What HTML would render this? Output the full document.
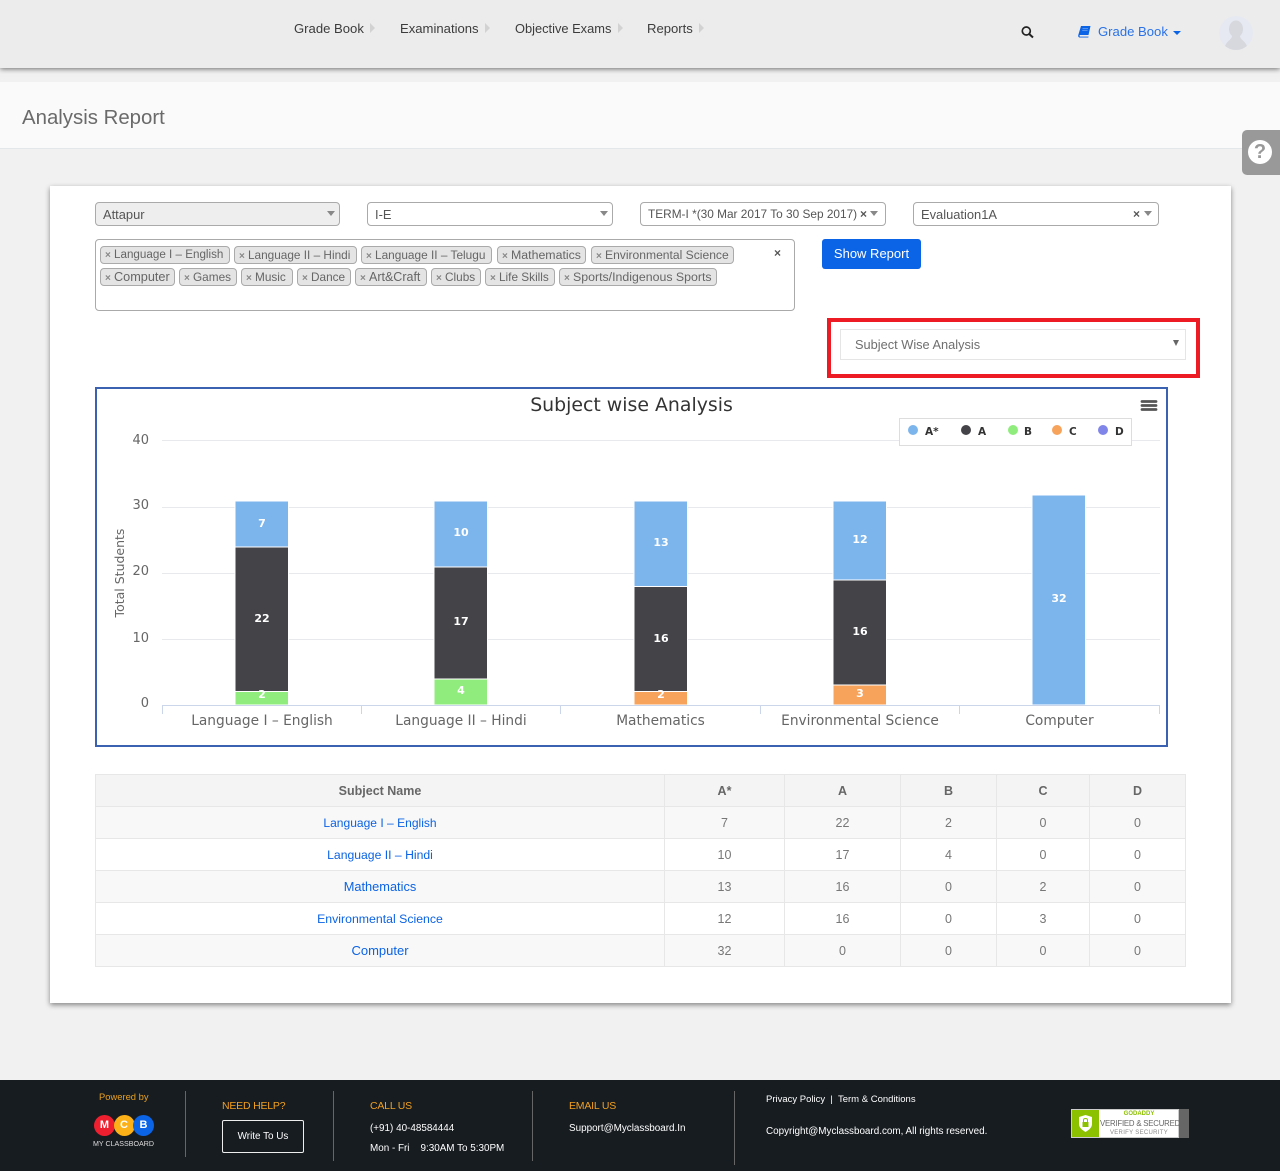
<!DOCTYPE html>
<html><head><meta charset="utf-8"><title>Analysis Report</title>
<style>
*{box-sizing:border-box}
html,body{margin:0;padding:0}
body{width:1280px;height:1171px;position:relative;overflow:hidden;background:#f1f1f1;font-family:"Liberation Sans",sans-serif;font-size:13px;color:#555}
.a{position:absolute;white-space:nowrap}
.nav{top:20px;font-size:13.1px;color:#3c3c3c;line-height:17px}
.ar{position:absolute;width:0;height:0;border-left:5px solid #d2d2d2;border-top:5px solid transparent;border-bottom:5px solid transparent;top:23px}
.sel{position:absolute;top:202px;height:24px;border:1px solid #aaa;border-radius:4px;background:#fff;font-size:12.9px;line-height:23px;padding-left:7px;color:#555;white-space:nowrap}
.car{position:absolute;width:0;height:0;border-left:4px solid transparent;border-right:4px solid transparent;border-top:5px solid #888}
.tag{position:absolute;height:18px;background:#e4e4e4;border:1px solid #aaa;border-radius:4px;font-size:11.8px;line-height:16px;color:#666;padding-left:4px;white-space:nowrap}
.tag i{display:inline-block;width:9px;font-style:normal;color:#888;font-size:10px;font-weight:bold}
table{position:absolute;left:95px;top:774px;width:1090px;border-collapse:collapse;table-layout:fixed;font-size:12.5px;color:#777}
td,th{border:1px solid #e7e7e7;height:32px;padding:0;text-align:center}
th{background:#f4f4f4;color:#666;font-weight:bold}
tr.o td{background:#f8f8f8}
tr.e td{background:#fff}
td a{color:#0b63e5;text-decoration:none}
.f{color:#fff;font-size:9.9px;line-height:12px}
.h{color:#f0a020;font-size:10.5px;line-height:12px;letter-spacing:-.2px}
.vl{position:absolute;width:1px;background:#666}
</style></head><body>

<div class="a" style="left:0;top:68px;width:1280px;height:14px;background:#f1f1f1"></div>
<div class="a" style="left:0;top:82px;width:1280px;height:67px;background:#fafafa;border-bottom:1px solid #e4e7ea"></div>
<div class="a" style="left:0;top:0;width:1280px;height:68px;background:#ececec;box-shadow:0 1px 5px rgba(0,0,0,.55)"></div>
<div class="a nav" style="left:294px">Grade Book</div><div class="ar" style="left:370px"></div>
<div class="a nav" style="left:400px">Examinations</div><div class="ar" style="left:485px"></div>
<div class="a nav" style="left:515px;font-size:12.85px">Objective Exams</div><div class="ar" style="left:618px"></div>
<div class="a nav" style="left:647px">Reports</div><div class="ar" style="left:699px"></div>

<svg class="a" style="left:1020px;top:24px" width="15" height="15" viewBox="0 0 15 15"><circle cx="6.300" cy="7" r="4" fill="none" stroke="#222" stroke-width="1.700"/><path d="M9.200 10L13 13.500" stroke="#222" stroke-width="2"/></svg>
<svg class="a" style="left:1078px;top:26px" width="13" height="12" viewBox="0 0 13 12"><path d="M3 0H12.500L10.500 9H2.200C1.200 9 1.200 10.600 2.200 10.600H10.600L10.300 11.500H1.800C.4 11.500 0 10.300.3 9Z" fill="#0b63e5"/><path d="M4.500 2.500H10M4.200 4.300H9.600" stroke="#6fa3f0" stroke-width=".8"/></svg>
<div class="a" style="left:1098px;top:23px;font-size:13.1px;line-height:17px;color:#2a72e6">Grade Book</div>
<div class="a" style="left:1173px;top:31px;width:0;height:0;border-left:4px solid transparent;border-right:4px solid transparent;border-top:4px solid #0b63e5"></div>
<svg class="a" style="left:1219px;top:16px" width="34" height="34" viewBox="0 0 34 34"><defs><clipPath id="c"><circle cx="17" cy="17" r="17"/></clipPath></defs><circle cx="17" cy="17" r="17" fill="#e6e9f1"/><g clip-path="url(#c)" fill="#d6d8dd"><ellipse cx="17" cy="13" rx="7" ry="8.500"/><path d="M13 20C13 24 6 25 5 34H29C28 25 21 24 21 20Z"/></g></svg>

<div class="a" style="left:22px;top:105px;font-size:20.400px;line-height:26px;color:#6a6a6a">Analysis Report</div>

<div class="a" style="left:1242px;top:130px;width:38px;height:45px;background:#999;border-radius:5px 0 0 5px"></div>
<div class="a" style="left:1248px;top:140px;width:24px;height:24px;border-radius:50%;background:#fff;color:#999;font-weight:bold;font-size:20px;line-height:24px;text-align:center">?</div>

<div class="a" style="left:50px;top:186px;width:1181px;height:817px;background:#fff;box-shadow:0 2px 5px rgba(0,0,0,.45)"></div>

<div class="sel" style="left:95px;width:245px;background:#eee">Attapur</div><div class="car" style="left:327px;top:211px"></div>
<div class="sel" style="left:367px;width:246px">I-E</div><div class="car" style="left:600px;top:211px"></div>
<div class="sel" style="left:640px;width:246px;font-size:11.850px">TERM-I *(30 Mar 2017 To 30 Sep 2017)</div><div class="a" style="left:860px;top:207px;font-size:12px;font-weight:bold;color:#555">×</div><div class="car" style="left:870px;top:211px"></div>
<div class="sel" style="left:913px;width:246px">Evaluation1A</div><div class="a" style="left:1133px;top:207px;font-size:12px;font-weight:bold;color:#555">×</div><div class="car" style="left:1144px;top:211px"></div>

<div class="a" style="left:95px;top:239px;width:700px;height:72px;border:1px solid #aaa;border-radius:4px;background:#fff"></div>
<div class="tag" style="left:100px;top:246px;width:130px;font-size:11.650px"><i>×</i>Language I – English</div>
<div class="tag" style="left:234px;top:246px;width:123px"><i>×</i>Language II – Hindi</div>
<div class="tag" style="left:361px;top:246px;width:131px;font-size:11.850px"><i>×</i>Language II – Telugu</div>
<div class="tag" style="left:497px;top:246px;width:89px;font-size:12.350px"><i>×</i>Mathematics</div>
<div class="tag" style="left:591px;top:246px;width:143px;font-size:12.100px"><i>×</i>Environmental Science</div>
<div class="a" style="left:774px;top:246px;font-size:12px;font-weight:bold;color:#555">×</div>
<div class="tag" style="left:100px;top:268px;width:75px;font-size:12.700px"><i>×</i>Computer</div>
<div class="tag" style="left:179px;top:268px;width:58px"><i>×</i>Games</div>
<div class="tag" style="left:241px;top:268px;width:52px"><i>×</i>Music</div>
<div class="tag" style="left:297px;top:268px;width:54px"><i>×</i>Dance</div>
<div class="tag" style="left:355px;top:268px;width:72px;font-size:12.500px"><i>×</i>Art&amp;Craft</div>
<div class="tag" style="left:431px;top:268px;width:50px"><i>×</i>Clubs</div>
<div class="tag" style="left:485px;top:268px;width:70px"><i>×</i>Life Skills</div>
<div class="tag" style="left:559px;top:268px;width:158px;font-size:12.350px"><i>×</i>Sports/Indigenous Sports</div>

<div class="a" style="left:822px;top:239px;width:99px;height:30px;background:#0b63e5;border-radius:3px;color:#fff;font-size:13px;line-height:30px;text-align:center">Show Report</div>

<div class="a" style="left:827px;top:318px;width:373px;height:60px;border:4px solid #ed1c24;background:#fff"></div>
<div class="a" style="left:840px;top:329px;width:346px;height:31px;border:1px solid #e5e5e5;background:#fff;font-size:12.800px;line-height:29px;padding-left:14px;color:#6f6f6f">Subject Wise Analysis</div>
<div class="car" style="left:1173px;top:340px;border-left-width:3.500px;border-right-width:3.500px;border-top-color:#666;border-top-width:6px"></div>

<svg class="a" style="left:95px;top:387px;font-family:'DejaVu Sans',sans-serif" width="1074" height="360" viewBox="95 387 1074 360">
<rect x="96" y="388" width="1071" height="358" fill="#fff" stroke="#3a62b0" stroke-width="2"/>
<text x="631.500" y="411" text-anchor="middle" font-size="18.900" fill="#333">Subject wise Analysis</text>
<path d="M1142 401.500H1156M1142 405.500H1156M1142 409.500H1156" stroke="#555" stroke-width="2.800" stroke-linecap="round"/>
<g stroke="#e8e9ec" stroke-width="1"><path d="M162 440.500H1160M162 507.500H1160M162 573.500H1160M162 639.500H1160"/></g>
<g font-size="13" fill="#666" text-anchor="end"><text x="149" y="444">40</text><text x="149" y="509">30</text><text x="149" y="575">20</text><text x="149" y="642">10</text><text x="149" y="707">0</text></g>
<text transform="translate(124 573) rotate(-90)" text-anchor="middle" font-size="12.500" fill="#666">Total Students</text>

<rect x="899.500" y="418.500" width="232" height="27" fill="#fff" stroke="#ddd"/>
<g font-size="10.500" font-weight="bold" fill="#333">
<circle cx="913" cy="430" r="5" fill="#7cb5ec"/><text x="925" y="435">A*</text>
<circle cx="966" cy="430" r="5" fill="#434348"/><text x="978" y="435">A</text>
<circle cx="1013" cy="430" r="5" fill="#90ed7d"/><text x="1024" y="435">B</text>
<circle cx="1057" cy="430" r="5" fill="#f7a35c"/><text x="1069" y="435">C</text>
<circle cx="1103" cy="430" r="5" fill="#8085e9"/><text x="1115" y="435">D</text></g>

<g stroke="#fff" stroke-width="1">
<rect x="235" y="501" width="53.500" height="46" fill="#7cb5ec"/><rect x="235" y="547" width="53.500" height="144.500" fill="#434348"/><rect x="235" y="691.500" width="53.500" height="13.500" fill="#90ed7d"/>
<rect x="434" y="501" width="53.500" height="66" fill="#7cb5ec"/><rect x="434" y="567" width="53.500" height="112" fill="#434348"/><rect x="434" y="679" width="53.500" height="26" fill="#90ed7d"/>
<rect x="634" y="501" width="53.500" height="85.500" fill="#7cb5ec"/><rect x="634" y="586.500" width="53.500" height="105" fill="#434348"/><rect x="634" y="691.500" width="53.500" height="13.500" fill="#f7a35c"/>
<rect x="833" y="501" width="53.500" height="79" fill="#7cb5ec"/><rect x="833" y="580" width="53.500" height="105" fill="#434348"/><rect x="833" y="685" width="53.500" height="20" fill="#f7a35c"/>
<rect x="1032" y="495" width="53.500" height="210" fill="#7cb5ec"/>
</g>
<g font-size="11" font-weight="bold" fill="#fff" text-anchor="middle">
<text x="262" y="527">7</text><text x="262" y="622">22</text><text x="262" y="698">2</text>
<text x="461" y="536">10</text><text x="461" y="625">17</text><text x="461" y="694">4</text>
<text x="661" y="546">13</text><text x="661" y="642">16</text><text x="661" y="698">2</text>
<text x="860" y="543">12</text><text x="860" y="635">16</text><text x="860" y="697">3</text>
<text x="1059" y="602">32</text></g>
<path d="M162 705.500H1160M162.500 705V714M361.500 705V714M560.500 705V714M760.500 705V714M959.500 705V714M1159.500 705V714" stroke="#ccd6eb" fill="none"/>
<g font-size="13.750" fill="#666" text-anchor="middle"><text x="262" y="725">Language I – English</text><text x="461" y="725">Language II – Hindi</text><text x="660.500" y="725">Mathematics</text><text x="860" y="725">Environmental Science</text><text x="1059.500" y="725">Computer</text></g>
</svg>

<table>
<colgroup><col style="width:569px"><col style="width:120px"><col style="width:116px"><col style="width:96px"><col style="width:93px"><col style="width:96px"></colgroup>
<tr><th>Subject Name</th><th>A*</th><th>A</th><th>B</th><th>C</th><th>D</th></tr>
<tr class="o"><td><a href="#" style="font-size:12.050px">Language I – English</a></td><td>7</td><td>22</td><td>2</td><td>0</td><td>0</td></tr>
<tr class="e"><td><a href="#" style="font-size:12.200px">Language II – Hindi</a></td><td>10</td><td>17</td><td>4</td><td>0</td><td>0</td></tr>
<tr class="o"><td><a href="#" style="font-size:12.800px">Mathematics</a></td><td>13</td><td>16</td><td>0</td><td>2</td><td>0</td></tr>
<tr class="e"><td><a href="#" style="font-size:12.300px">Environmental Science</a></td><td>12</td><td>16</td><td>0</td><td>3</td><td>0</td></tr>
<tr class="o"><td><a href="#" style="font-size:13px">Computer</a></td><td>32</td><td>0</td><td>0</td><td>0</td><td>0</td></tr>
</table>

<div class="a" style="left:0;top:1080px;width:1280px;height:91px;background:#171c20"></div>
<div class="a" style="left:99px;top:1091px;font-size:9.400px;line-height:12px;color:#e8a020">Powered by</div>
<div class="a" style="left:94px;top:1115px;width:21px;height:21px;border-radius:50%;background:#ee2030;color:#fff;font-weight:bold;font-size:11px;line-height:21px;text-align:center">M</div>
<div class="a" style="left:113.500px;top:1115px;width:21px;height:21px;border-radius:50%;background:#fbb117;color:#fff;font-weight:bold;font-size:11px;line-height:21px;text-align:center">C</div>
<div class="a" style="left:133px;top:1115px;width:21px;height:21px;border-radius:50%;background:#0b63e5;color:#fff;font-weight:bold;font-size:11px;line-height:21px;text-align:center">B</div>
<div class="a" style="left:93px;top:1139px;font-size:7.100px;line-height:10px;color:#ddd">MY CLASSBOARD</div>
<div class="vl" style="left:185px;top:1091px;height:66px"></div>
<div class="a h" style="left:222px;top:1100px">NEED HELP?</div>
<div class="a f" style="left:222px;top:1120px;width:82px;height:33px;border:1px solid #eee;border-radius:2px;line-height:31px;text-align:center">Write To Us</div>
<div class="vl" style="left:333px;top:1091px;height:70px"></div>
<div class="a h" style="left:370px;top:1100px">CALL US</div>
<div class="a f" style="left:370px;top:1123px">(+91) 40-48584444</div>
<div class="a f" style="left:370px;top:1143px">Mon - Fri &nbsp;&nbsp; 9:30AM To 5:30PM</div>
<div class="vl" style="left:532px;top:1091px;height:70px"></div>
<div class="a h" style="left:569px;top:1100px">EMAIL US</div>
<div class="a f" style="left:569px;top:1123px">Support@Myclassboard.In</div>
<div class="vl" style="left:734px;top:1091px;height:74px"></div>
<div class="a f" style="left:766px;top:1094px;font-size:9.500px">Privacy Policy &nbsp;|&nbsp; Term &amp; Conditions</div>
<div class="a f" style="left:766px;top:1126px">Copyright@Myclassboard.com, All rights reserved.</div>
<div class="a" style="left:1071px;top:1109px;width:108px;height:29px;background:#fff;border:1px solid #ccc"></div>
<div class="a" style="left:1072px;top:1110px;width:27px;height:27px;background:#8cc100"></div>
<svg class="a" style="left:1079px;top:1115px" width="13" height="17" viewBox="0 0 13 17"><path d="M6.500 0L13 2V9C13 13 9 15.500 6.500 17C4 15.500 0 13 0 9V2Z" fill="#fff"/><rect x="3.500" y="7" width="6" height="5" fill="#8cc100"/><path d="M4.500 7V5C4.500 3 8.500 3 8.500 5V7" stroke="#8cc100" fill="none"/></svg>
<div class="a" style="left:1100px;top:1111px;width:78px;text-align:center;font-size:6px;line-height:7px;font-weight:bold;color:#8cc100">GODADDY</div>
<div class="a" style="left:1100px;top:1118px;width:78px;text-align:center;font-size:7.800px;line-height:11px;color:#666;letter-spacing:-.2px">VERIFIED &amp; SECURED</div>
<div class="a" style="left:1100px;top:1129px;width:78px;text-align:center;font-size:6px;line-height:8px;color:#888;letter-spacing:.3px">VERIFY SECURITY</div>
<div class="a" style="left:1179px;top:1109px;width:10px;height:29px;background:#666"></div>
</body></html>
